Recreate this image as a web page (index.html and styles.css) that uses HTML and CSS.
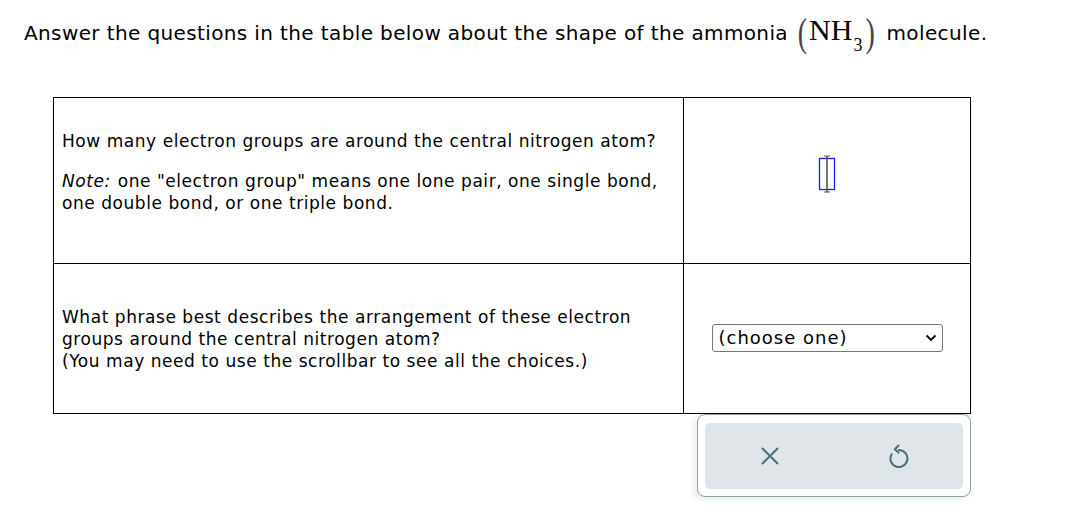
FILE: index.html
```html
<!DOCTYPE html>
<html>
<head>
<meta charset="utf-8">
<link rel="stylesheet" href="styles.css">
</head>
<body>
<div class="page">
  <div class="prompt"><span class="ptext">Answer the questions in the table below about the shape of the ammonia</span> <span class="math"><span class="paren po">(</span><span class="nh">NH</span><span class="sub">3</span><span class="paren pc">)</span></span> <span class="ptext">molecule.</span></div>
  <div class="qtable">
    <div class="row row1">
      <div class="qcell">
        <p class="q">How many electron groups are around the central nitrogen atom?</p>
        <p class="note"><i class="note-label">Note:</i> one "electron group" means one lone pair, one single bond, one double bond, or one triple bond.</p>
      </div>
      <div class="acell">
        <span class="inputbox">
          <svg width="20" height="40" viewBox="0 0 20 40">
            <rect x="2.5" y="4.5" width="15" height="31" fill="#fff" stroke="#1a1aff" stroke-width="1.3"/>
            <line x1="10" y1="2" x2="10" y2="38" stroke="#555" stroke-width="1.6"/>
            <line x1="7" y1="2" x2="13" y2="2" stroke="#555" stroke-width="1"/>
            <line x1="7" y1="38" x2="13" y2="38" stroke="#555" stroke-width="1"/>
          </svg>
        </span>
      </div>
    </div>
    <div class="row row2">
      <div class="qcell">
        <p class="q2">What phrase best describes the arrangement of these electron groups around the central nitrogen atom?<br>(You may need to use the scrollbar to see all the choices.)</p>
      </div>
      <div class="acell">
        <div class="select">
          <span>(choose one)</span>
          <svg width="12" height="8" viewBox="0 0 12 8"><path d="M1.5 1.5 L6 6 L10.5 1.5" fill="none" stroke="#000" stroke-width="1.8"/></svg>
        </div>
      </div>
    </div>
  </div>
  <div class="actions-wrap">
    <div class="actions">
      <div class="actbar">
        <button class="btn" aria-label="clear">
          <svg width="18" height="18" viewBox="0 0 18 18"><path d="M1.5 1.5 L16.5 16.5 M16.5 1.5 L1.5 16.5" stroke="#4a6f7c" stroke-width="2" fill="none" stroke-linecap="round"/></svg>
        </button>
        <button class="btn" aria-label="undo">
          <svg width="22" height="24" viewBox="0 0 22 24"><path d="M11 6 A8.5 8.5 0 1 1 3.6 10.2" fill="none" stroke="#4a6f7c" stroke-width="2" stroke-linecap="round"/><path d="M10.5 1.5 L6.8 5.2 L10.5 8.6" fill="none" stroke="#4a6f7c" stroke-width="2" stroke-linecap="round" stroke-linejoin="round"/></svg>
        </button>
      </div>
    </div>
  </div>
</div>
</body>
</html>
```
FILE: styles.css
```css
html, body { margin: 0; padding: 0; background: #fff; }
body { font-family: "DejaVu Sans", Verdana, sans-serif; color: #000; }
.page { width: 1074px; height: 514px; }
.prompt { height: 97px; box-sizing: border-box; padding: 17px 0 0 24px; font-size: 20px; line-height: 26px; letter-spacing: 0.38px; white-space: nowrap; }
.math { font-family: "Liberation Serif", "Times New Roman", serif; letter-spacing: 0; display: inline-block; vertical-align: baseline; margin-left: 3px; margin-right: 5px; }
.math .nh { font-size: 30px; }
.math .paren { display: inline-block; font-size: 28px; color: #444; transform: translateY(3px) scaleY(1.45); transform-origin: 50% 62%; }
.math .po { margin-right: 2px; }
.math .pc { margin-left: 3px; }
.math .sub { font-size: 18px; position: relative; top: 11px; margin-left: 1px; }
.qtable { margin-left: 53px; width: 918px; border: 1px solid #000; box-sizing: border-box; }
.row { display: flex; }
.row1 { height: 165px; border-bottom: 1px solid #000; }
.row2 { height: 149px; }
.qcell { width: 630px; border-right: 1px solid #000; padding: 0 8px; box-sizing: border-box; display: flex; flex-direction: column; justify-content: center; font-size: 17px; line-height: 22px; letter-spacing: 0.55px; }
.row1 .qcell { padding-bottom: 18px; }
.acell { flex: 1; display: flex; align-items: center; justify-content: center; }
.q { margin: 0 0 18px 0; }
.note { margin: 0; }
.note-label { margin-right: 1px; }
.q2 { margin: 0; }
.inputbox { display: block; margin-top: -14px; }
.inputbox svg { display: block; }
.select { width: 231px; height: 28px; border: 1px solid #767676; border-radius: 3px; box-sizing: border-box; display: flex; align-items: center; justify-content: space-between; padding: 0 5px 0 6px; font-size: 18px; letter-spacing: 1px; margin-top: -2px; }
.select svg { display: block; }
.actions-wrap { display: flex; justify-content: flex-end; padding-right: 103px; }
.actions { width: 274px; height: 83px; border: 1px solid #8aa2ad; border-radius: 8px; box-sizing: border-box; padding: 8px 7px 7px 7px; background: #fff; box-shadow: -3px 3px 6px rgba(0,0,0,0.08); }
.actbar { background: #dfe5e8; border-radius: 5px; height: 100%; display: flex; }
.btn { flex: 1; border: 0; background: transparent; display: flex; align-items: center; justify-content: center; padding: 0; }
.btn svg { display: block; }
```
